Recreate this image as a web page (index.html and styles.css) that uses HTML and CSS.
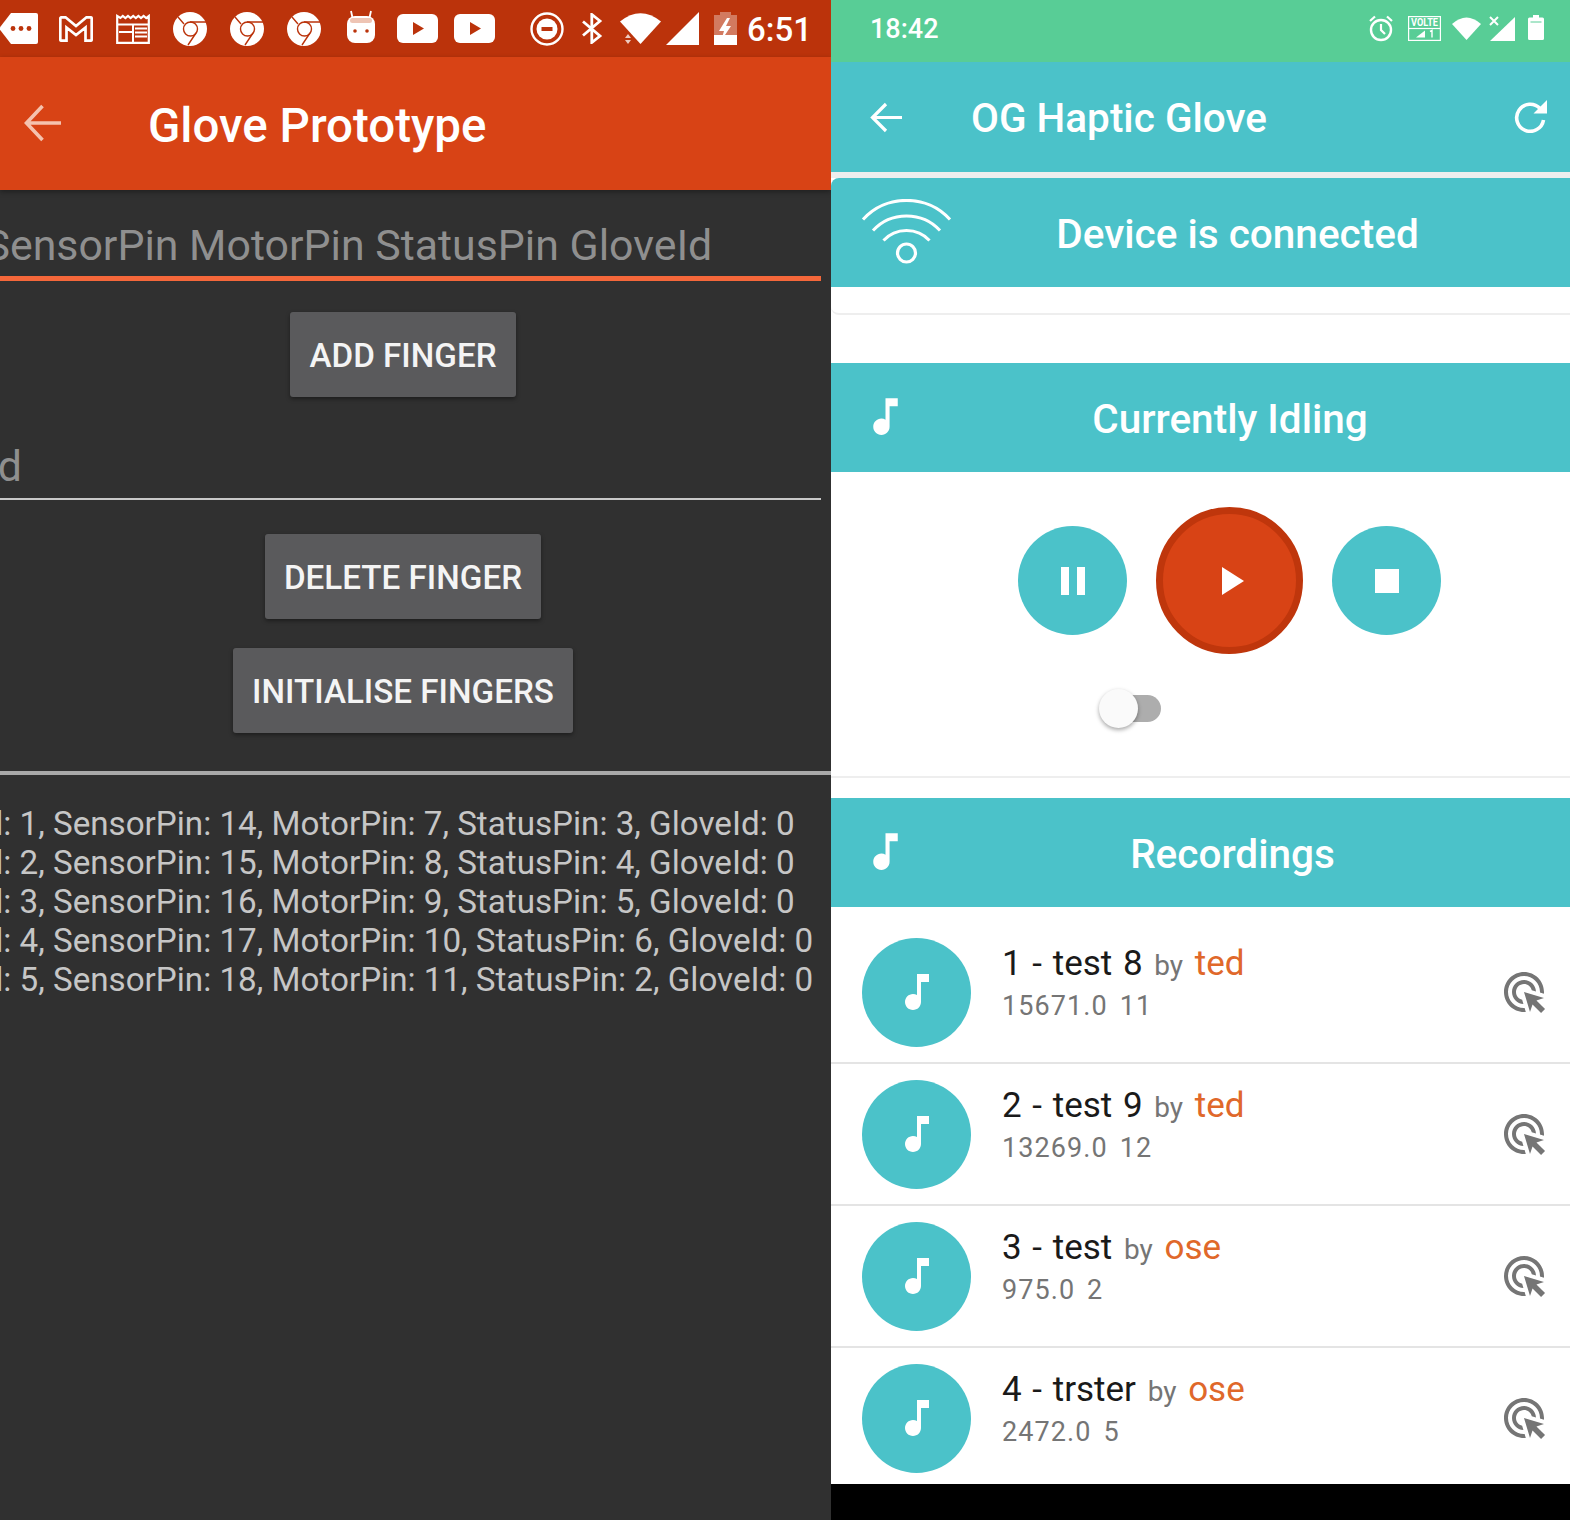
FILE: index.html
```html
<!DOCTYPE html>
<html lang="en">
<head>
  <meta charset="UTF-8">
  <title>Glove apps</title>
  <link rel="stylesheet" href="styles.css">
</head>
<body>
  <svg class="defs">
    <symbol id="chrome" viewBox="0 0 34 34">
      <circle cx="17" cy="17" r="17" fill="#fff"/>
      <circle cx="17.5" cy="17" r="7" fill="none" stroke="#bb330b" stroke-width="1.4"/>
      <path d="M17 10H33M11 12L5 5M23 21L15 33" fill="none" stroke="#bb330b" stroke-width="1.4"/>
    </symbol>
    <symbol id="yt" viewBox="0 0 41 29">
      <rect width="41" height="29" rx="6" fill="#fff"/>
      <path d="M16 8L27 14.5 16 21Z" fill="#bb330b"/>
    </symbol>
    <symbol id="note" viewBox="0 0 24 24">
      <path d="M12 3v10.55c-.59-.34-1.27-.55-2-.55-2.21 0-4 1.79-4 4s1.79 4 4 4 4-1.79 4-4V7h4V3h-6z" fill="#fff"/>
    </symbol>
    <symbol id="tap" viewBox="0 0 24 24">
      <path d="M11.71 17.99C8.53 17.84 6 15.22 6 12c0-3.31 2.69-6 6-6 3.22 0 5.84 2.53 5.99 5.71l-2.1-.63C15.48 9.31 13.89 8 12 8c-2.21 0-4 1.79-4 4 0 1.89 1.31 3.48 3.08 3.89l.63 2.1zM22 12c0 .3-.01.6-.04.9l-1.97-.59C20 12.21 20 12.1 20 12c0-4.42-3.58-8-8-8s-8 3.58-8 8 3.58 8 8 8c.1 0 .21 0 .31-.01l.59 1.97c-.3.03-.6.04-.9.04-5.52 0-10-4.48-10-10S6.48 2 12 2s10 4.48 10 10zm-3.77 4.26L22 15l-10-3 3 10 1.26-3.77 4.27 4.27 1.98-1.98-4.28-4.26z" fill="#757575"/>
    </symbol>
  </svg>

  <!-- left phone -->
  <main class="phone dark">
    <div class="status status-orange">
      <div class="slots">
        <span class="slot"><svg width="39" height="31" viewBox="0 0 39 31"><path d="M12 0H37a2 2 0 0 1 2 2V29a2 2 0 0 1-2 2H12L0 15.5Z" fill="#fff"/><circle cx="14" cy="15.5" r="2.4" fill="#bb330b"/><circle cx="22" cy="15.5" r="2.4" fill="#bb330b"/><circle cx="30" cy="15.5" r="2.4" fill="#bb330b"/></svg></span>
        <span class="slot"><svg width="34" height="26" viewBox="0 0 34 26"><path d="M2.5 1.3h4L17 10 27.5 1.3h4a1.2 1.2 0 0 1 1.2 1.2v21a1.2 1.2 0 0 1-1.2 1.2H26.5V11.5L17 19 7.5 11.5V24.7H2.5a1.2 1.2 0 0 1-1.2-1.2v-21a1.2 1.2 0 0 1 1.2-1.2z" fill="none" stroke="#fff" stroke-width="2.7"/></svg></span>
        <span class="slot"><svg width="34" height="30" viewBox="0 0 34 30"><path d="M1.2 2V28.8H32.8V2l-2.6 2-2.6-2-2.6 2-2.6-2-2.6 2-2.6-2-2.6 2-2.6-2-2.6 2-2.6-2-2.4 2z" fill="none" stroke="#fff" stroke-width="2.2"/><path d="M1 10.5H33M17 10.5V28M3 18H17M19 14.5H31M19 18.5H31M19 22.5H31" fill="none" stroke="#fff" stroke-width="2"/></svg></span>
        <span class="slot"><svg width="34" height="34"><use href="#chrome"/></svg></span>
        <span class="slot"><svg width="34" height="34"><use href="#chrome"/></svg></span>
        <span class="slot"><svg width="34" height="34"><use href="#chrome"/></svg></span>
        <span class="slot"><svg class="marsh" width="28" height="33" viewBox="0 0 28 33"><path d="M6 10L4 1M22 10L24 1" stroke="#fff" stroke-width="1.8"/><rect y="6" width="28" height="27" rx="8" fill="#fff"/><rect x="3" y="8" width="22" height="5" rx="2.5" fill="#eec4b4"/><circle cx="8" cy="21" r="1.8" fill="#bb330b"/><circle cx="20" cy="21" r="1.8" fill="#bb330b"/></svg></span>
        <span class="slot"><svg width="41" height="29"><use href="#yt"/></svg></span>
        <span class="slot"><svg width="41" height="29"><use href="#yt"/></svg></span>
      </div>
      <div class="sys-orange">
        <svg width="34" height="34" viewBox="0 0 34 34"><circle cx="17" cy="17" r="15.5" fill="none" stroke="#fff" stroke-width="2.4"/><circle cx="17" cy="17" r="10.5" fill="#fff"/><rect x="11.5" y="15" width="11" height="4" fill="#bb330b"/></svg>
        <svg width="22" height="31" viewBox="0 0 22 31"><path d="M2 8.5L19 23 10.8 29.5V1.5L19 8 2 22.5" fill="none" stroke="#fff" stroke-width="2.8"/></svg>
        <svg width="41" height="31" viewBox="0 0 41 31"><path d="M0 8.5Q20.5-8 41 8.5L20.5 31Z" fill="#fff"/><path d="M5 25L8 21 11 25ZM5 27H11L8 31Z" fill="#fff" opacity=".75"/></svg>
        <svg class="signal" width="33" height="33" viewBox="0 0 33 33"><path d="M33 0V33H0Z" fill="#fff"/></svg>
        <svg width="23" height="33" viewBox="0 0 23 33"><path d="M6 0H17V3H23V23H0V3H6Z" fill="#fff" opacity=".35"/><path d="M0 23H23V33H0Z" fill="#fff"/><path d="M13 6L5 19H10L7 29 17 14H12L16 6Z" fill="#fff"/></svg>
        <span class="clock">6:51</span>
      </div>
    </div>

    <header class="appbar-orange">
      <svg class="arrow-orange" width="38" height="38" viewBox="0 0 38 38"><path d="M37 19H3M18.5 2L2.5 19 18.5 36" fill="none" stroke="#f5c2ae" stroke-width="3.6"/></svg>
      <h1 class="title-orange">Glove Prototype</h1>
    </header>

    <div class="field field-active"><span class="field-text field-long">SensorPin MotorPin StatusPin GloveId</span></div>
    <div class="btn-row btn-first"><button class="btn" type="button">ADD FINGER</button></div>
    <div class="field field-idle"><span class="field-text field-short">Id</span></div>
    <div class="btn-row btn-second"><button class="btn" type="button">DELETE FINGER</button></div>
    <div class="btn-row btn-third"><button class="btn" type="button">INITIALISE FINGERS</button></div>
    <hr class="rule">
    <ul class="fingers">
      <li>Id: 1, SensorPin: 14, MotorPin: 7, StatusPin: 3, GloveId: 0</li>
      <li>Id: 2, SensorPin: 15, MotorPin: 8, StatusPin: 4, GloveId: 0</li>
      <li>Id: 3, SensorPin: 16, MotorPin: 9, StatusPin: 5, GloveId: 0</li>
      <li>Id: 4, SensorPin: 17, MotorPin: 10, StatusPin: 6, GloveId: 0</li>
      <li>Id: 5, SensorPin: 18, MotorPin: 11, StatusPin: 2, GloveId: 0</li>
    </ul>
  </main>

  <!-- right phone -->
  <main class="phone light">
    <div class="status status-green">
      <span class="clock-green">18:42</span>
      <div class="sys-green">
        <svg class="ic-alarm" width="24" height="27" viewBox="0 0 24 27"><circle cx="12" cy="15" r="10" fill="none" stroke="#fff" stroke-width="2.4"/><path d="M12 9V15L16 19M1 6L6 1.5M23 6L18 1.5" fill="none" stroke="#fff" stroke-width="2.2"/></svg>
        <svg width="33" height="25" viewBox="0 0 33 25"><rect x=".6" y=".6" width="31.8" height="23.8" fill="none" stroke="#fff" stroke-width="1.2"/><path d="M1 12.5H32" stroke="#fff" stroke-width="1.2"/><text class="volte" x="16.5" y="10" text-anchor="middle" textLength="27" lengthAdjust="spacingAndGlyphs">VOLTE</text><path d="M8 21.5L17 14.5V21.5Z" fill="#fff"/><path d="M22 15.5L24 14.5V21.5" fill="none" stroke="#fff" stroke-width="1.4"/></svg>
        <svg class="ic-wifi" width="29" height="23" viewBox="0 0 29 23"><path d="M0 7Q14.5-6 29 7L14.5 23Z" fill="#fff"/></svg>
        <svg width="26" height="25" viewBox="0 0 26 25"><path d="M26 1V25H1Z" fill="#fff"/><path d="M1 1L9 9M9 1L1 9" stroke="#fff" stroke-width="2"/></svg>
        <svg class="bat-green" width="16" height="25" viewBox="0 0 16 25"><path d="M5 0H11V2.5H14.5A1.5 1.5 0 0 1 16 4V23.5A1.5 1.5 0 0 1 14.5 25H1.5A1.5 1.5 0 0 1 0 23.5V4A1.5 1.5 0 0 1 1.5 2.5H5Z" fill="#fff"/><path d="M2.5 7H13.5" stroke="#58cd96" stroke-width="1"/></svg>
      </div>
    </div>

    <header class="appbar-teal">
      <svg width="33" height="31" viewBox="0 0 33 31"><path d="M32 15.5H3M16 2L2.5 15.5 16 29" fill="none" stroke="#fff" stroke-width="3.2"/></svg>
      <h1 class="title-teal">OG Haptic Glove</h1>
      <svg class="refresh" width="34" height="33" viewBox="0 0 34 33"><path d="M26 8.5A13.5 13.5 0 1 0 29.5 20" fill="none" stroke="#fff" stroke-width="3.6"/><path d="M33 0V13.5H19.5Z" fill="#fff"/></svg>
    </header>

    <section class="connected">
      <div class="head head-wifi">
        <svg width="91" height="65" viewBox="0 0 90 65"><path d="M1.5 20.5C24-5 66-5 88.5 20.5M11.5 31.5C29 12 61 12 78.5 31.5M22 41.5C34 28 56 28 68 41.5" fill="none" stroke="#fff" stroke-width="3"/><circle cx="45" cy="54" r="9" fill="none" stroke="#fff" stroke-width="3.2"/></svg>
        <h2 class="head-title">Device is connected</h2>
      </div>
      <div class="connected-foot"></div>
    </section>

    <section class="player">
      <div class="head head-idle">
        <svg class="note-big" width="49" height="49"><use href="#note"/></svg>
        <h2 class="head-title">Currently Idling</h2>
      </div>
      <div class="controls">
        <button class="round" type="button"><svg width="24" height="28" viewBox="0 0 24 28"><path d="M0 0H8V28H0ZM16 0H24V28H16Z" fill="#fff"/></svg></button>
        <button class="round round-play" type="button"><svg class="play-ic" width="22" height="28" viewBox="0 0 22 28"><path d="M0 0L22 14 0 28Z" fill="#fff"/></svg></button>
        <button class="round" type="button"><span class="stop"></span></button>
      </div>
      <div class="toggle"><span class="knob"></span></div>
    </section>

    <section class="recordings">
      <div class="head head-rec">
        <svg class="note-big" width="49" height="49"><use href="#note"/></svg>
        <h2 class="head-title">Recordings</h2>
      </div>
      <div class="rec rec-first">
        <span class="disc"><svg width="48" height="48"><use href="#note"/></svg></span>
        <div class="rec-text">
          <p class="rec-name">1 - test 8 <small>by</small> <em>ted</em></p>
          <p class="rec-meta">15671.0 11</p>
        </div>
        <svg class="tap" width="48" height="48"><use href="#tap"/></svg>
      </div>
      <div class="rec">
        <span class="disc"><svg width="48" height="48"><use href="#note"/></svg></span>
        <div class="rec-text">
          <p class="rec-name">2 - test 9 <small>by</small> <em>ted</em></p>
          <p class="rec-meta">13269.0 12</p>
        </div>
        <svg class="tap" width="48" height="48"><use href="#tap"/></svg>
      </div>
      <div class="rec">
        <span class="disc"><svg width="48" height="48"><use href="#note"/></svg></span>
        <div class="rec-text">
          <p class="rec-name">3 - test <small>by</small> <em>ose</em></p>
          <p class="rec-meta">975.0 2</p>
        </div>
        <svg class="tap" width="48" height="48"><use href="#tap"/></svg>
      </div>
      <div class="rec rec-last">
        <span class="disc"><svg width="48" height="48"><use href="#note"/></svg></span>
        <div class="rec-text">
          <p class="rec-name">4 - trster <small>by</small> <em>ose</em></p>
          <p class="rec-meta">2472.0 5</p>
        </div>
        <svg class="tap" width="48" height="48"><use href="#tap"/></svg>
      </div>
    </section>
    <div class="navbar"></div>
  </main>
</body>
</html>
```

FILE: styles.css
```css
* { box-sizing:border-box; }
html, body { margin:0; padding:0; }
body { display:flex; width:1570px; height:1520px; overflow:hidden; font-family:Roboto, "Liberation Sans", sans-serif; }
h1, h2, p, ul { margin:0; padding:0; }
svg { display:block; flex:none; }
.defs { display:none; }
.phone { height:1520px; overflow:hidden; }

/* left phone */
.dark { width:831px; flex:none; background:#303030; color:#ccc; }
.status { display:flex; align-items:center; }
.status-orange { height:57px; background:#bb330b; justify-content:space-between; }
.slots { display:flex; margin-left:-10px; }
.slot { width:57px; display:flex; justify-content:center; align-items:center; }
.marsh { margin-top:-4px; }
.sys-orange { display:flex; align-items:center; gap:17px; margin-right:19px; }
.signal { margin:0 -2px 0 -12px; }
.clock { color:#fff; font-size:33px; font-weight:500; margin-left:-7px; margin-top:2px; }
.appbar-orange { height:133px; background:#d84315; display:flex; align-items:center; padding-left:24px; box-shadow:0 2px 5px rgba(0,0,0,.35); position:relative; }
.title-orange { color:#fff; font-size:47.5px; font-weight:500; margin:4px 0 0 86px; }
.arrow-orange { margin-top:-1px; }

.field { width:821px; overflow:hidden; white-space:nowrap; color:#8f8f8f; font-size:42.85px; line-height:52px; }
.field-active { height:91px; padding-top:29px; border-bottom:5px solid #f4673a; }
.field-idle { height:82px; padding-top:22px; border-bottom:2px solid #c8c8c8; }
.field-text { display:block; }
.field-long { margin-left:-15.5px; }
.field-short { margin-left:-14px; }

.btn-row { display:flex; justify-content:center; padding-right:25px; }
.btn-first { margin-top:31px; margin-bottom:21px; }
.btn-second { margin-top:34px; }
.btn-third { margin-top:29px; }
.btn { height:85px; padding:2px 19px 0; border:none; border-radius:3px; background:#5a5a5c; color:#f4f4f4; font-family:inherit; font-size:33.2px; font-weight:500; box-shadow:0 2px 4px rgba(0,0,0,.4); }
.rule { height:4px; margin:38px 0 0; border:none; background:#a9a9a9; }
.fingers { list-style:none; margin-top:30px; margin-left:-24.5px; white-space:nowrap; font-size:33.2px; line-height:38.9px; color:#c6c6c6; }

/* right phone */
.light { flex:1; background:#fff; color:#111; }
.status-green { height:62px; background:#58cd96; justify-content:space-between; padding-left:39px; }
.clock-green { color:#fff; font-size:27px; font-weight:500; margin-bottom:4px; }
.sys-green { display:flex; align-items:center; gap:11px; margin-right:26px; margin-top:-6px; }
.ic-alarm { margin-right:4px; }
.ic-wifi { margin-right:-3px; }
.bat-green { margin-left:2px; margin-top:-2px; }
.volte { font-family:Roboto, sans-serif; font-size:10px; font-weight:700; fill:#fff; }
.appbar-teal { height:110px; background:#4bc2c9; display:flex; align-items:center; padding:0 22px 0 39px; }
.title-teal { color:#fff; font-size:40.5px; font-weight:500; margin:2px 0 0 68px; flex:1; }
.refresh { margin-top:-2px; }

.connected { border-top:6px solid #eee; }
.head { height:109px; background:#4bc2c9; display:flex; align-items:center; color:#fff; }
.head-title { flex:1; text-align:center; font-size:40.5px; font-weight:500; margin-top:2px; }
.head-wifi { border-top-left-radius:8px; padding:0 47px 0 30px; }
.head-wifi svg { margin-top:-3px; }
.head-idle { padding-left:30px; padding-right:20px; }
.head-rec { padding-left:30px; padding-right:15px; }
.note-big { margin-left:0; margin-top:-3px; }
.connected-foot { height:28px; border-bottom:2px solid #eee; border-bottom-left-radius:8px; }
.player { margin-top:48px; height:415px; border-bottom:2px solid #eee; }
.controls { display:flex; align-items:center; gap:29px; padding-left:187px; margin-top:35px; }
.round { width:109px; height:109px; border:none; padding:0; border-radius:50%; background:#4bc2c9; display:flex; align-items:center; justify-content:center; }
.round-play { width:147px; height:147px; border:7px solid #bf360c; background:#d84315; }
.play-ic { margin-left:6px; }
.stop { width:24px; height:24px; background:#fff; }
.toggle { width:51px; height:27px; margin:41px 0 0 279px; background:#adadad; border-radius:14px; display:flex; align-items:center; }
.knob { width:39px; height:39px; margin-left:-11px; flex:none; border-radius:50%; background:#fafafa; box-shadow:0 2px 4px rgba(0,0,0,.35); }

.recordings { margin-top:20px; }
.rec { height:142px; display:flex; align-items:center; padding:0 22px 0 31px; border-bottom:2px solid #e4e4e4; }
.rec-first { height:157px; padding-top:15px; }
.rec-last { height:136px; padding-top:4px; border-bottom:0; }
.disc { width:109px; height:109px; flex:none; border-radius:50%; background:#4bc2c9; display:flex; align-items:center; justify-content:center; }
.rec-text { flex:1; margin:-15px 0 0 31px; }
.rec-name { font-size:35px; line-height:42px; word-spacing:2px; color:#1a1a1a; }
.rec-name small { font-size:28px; color:#757575; margin:0 1px; }
.rec-name em { font-style:normal; color:#e0682a; }
.rec-meta { font-size:27px; line-height:39px; color:#757575; letter-spacing:1.1px; word-spacing:4px; }
.navbar { height:36px; background:#000; }
```
